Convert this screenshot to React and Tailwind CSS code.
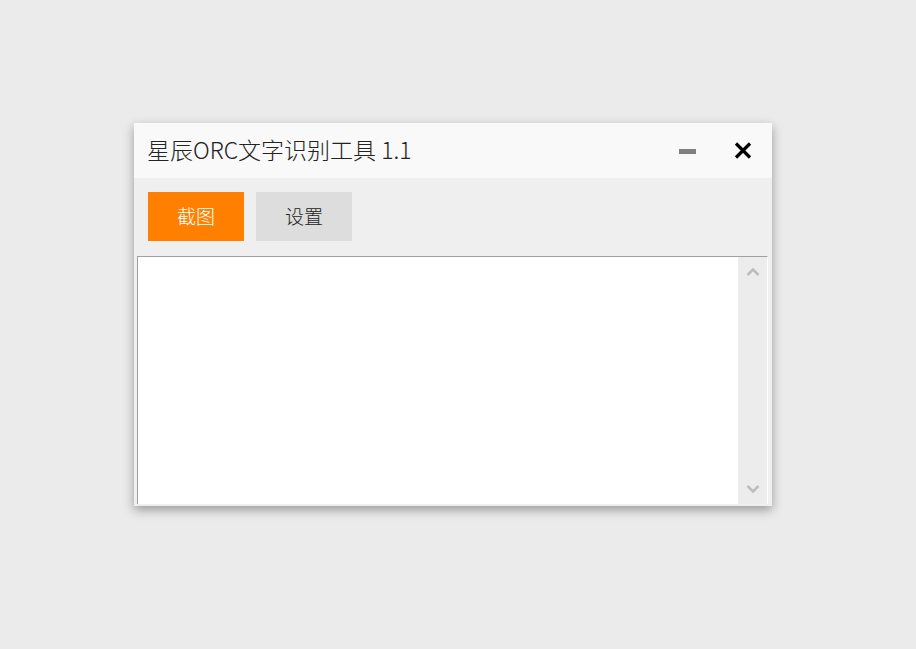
import { useState } from 'react';

export default function App() {
	const [text, setText] = useState('');

	return (
		<div
			className="w-[916px] h-[649px] bg-[#ebebeb] pt-[123px] pl-[134px]"
			style={{ fontFamily: '"Segoe UI", "Noto Sans CJK SC", "Noto Sans", sans-serif' }}
		>
			<div className="w-[638px] h-[383px] bg-[#efefef] flex flex-col shadow-[0_4px_10px_rgba(0,0,0,0.35)]">
				{/* Title bar */}
				<div className="h-[55px] bg-[#f9f9f9] flex items-center pl-[13px] pr-[20px]">
					<span className="text-[23px] font-light text-[#222] leading-none -mt-[3px]">
						星辰ORC文字识别工具 1.1
					</span>
					<div className="ml-auto flex items-center gap-[38px]">
						<button className="w-[17px] h-[5px] bg-[#808080] mt-[1px]" />
						<button className="w-[18px] h-[18px] flex items-center justify-center">
							<svg width="18" height="17" viewBox="0 0 18 17">
								<path d="M2 1.5 L16 15.5 M16 1.5 L2 15.5" stroke="#000" strokeWidth="3.2" />
							</svg>
						</button>
					</div>
				</div>

				{/* Toolbar */}
				<div className="flex gap-[12px] pl-[14px] pt-[14px] h-[78px]">
					<button className="w-[96px] h-[49px] bg-[#ff8000] text-white text-[19px] font-light">截图</button>
					<button className="w-[96px] h-[49px] bg-[#dddddd] text-[#222] text-[19px] font-light">设置</button>
				</div>

				{/* Text area */}
				<div className="ml-[3px] w-[631px] h-[248px] flex bg-white border-t border-l border-[#a0a0a0] border-r border-r-white">
					<textarea
						value={text}
						onChange={(e) => setText(e.target.value)}
						className="flex-1 resize-none outline-none bg-white p-1 text-sm"
					/>
					<div className="w-[29px] bg-[#ececec] flex flex-col items-center justify-between py-[10px]">
						<svg width="14" height="9" viewBox="0 0 14 9">
							<path d="M1.5 8 L7 2.5 L12.5 8" fill="none" stroke="#bdbdbd" strokeWidth="2.5" />
						</svg>
						<svg width="14" height="9" viewBox="0 0 14 9">
							<path d="M1.5 1 L7 6.5 L12.5 1" fill="none" stroke="#bdbdbd" strokeWidth="2.5" />
						</svg>
					</div>
				</div>
			</div>
		</div>
	);
}
